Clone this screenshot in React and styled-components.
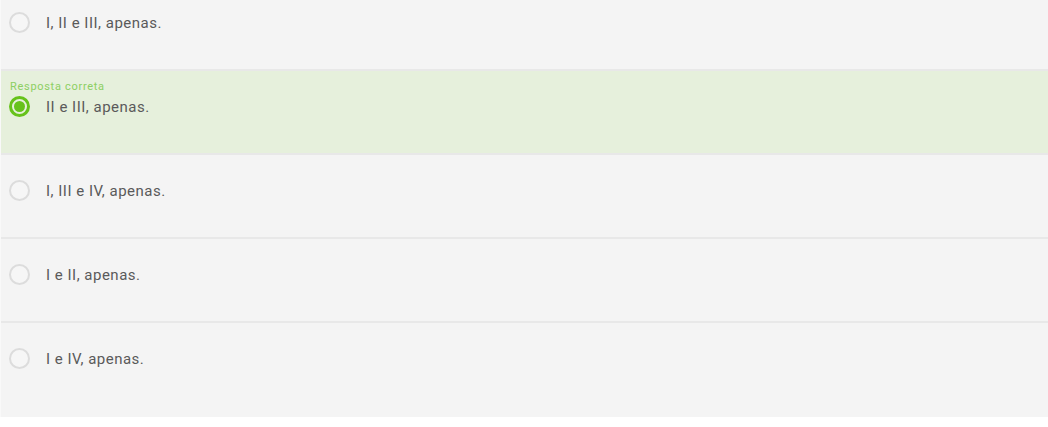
import styled, { createGlobalStyle } from 'styled-components';

const GlobalStyle = createGlobalStyle`
  body {
    margin: 0;
    background: #ffffff;
    font-family: Roboto, "Liberation Sans", Arial, sans-serif;
  }
`;

const List = styled.div`
  margin-top: -13px;
  padding-bottom: 12px;
  background: #f4f4f4;
  border-left: 1px solid #f9f9f9;
`;

const Option = styled.div`
  position: relative;
  display: flex;
  align-items: center;
  gap: 16px;
  padding: 25px 8px 36px 8px;
  border-bottom: 2px solid #e8e8e8;
  background: ${(p) => (p.correct ? '#e6f0dc' : '#f4f4f4')};

  &:last-child {
    border-bottom: none;
  }
`;

const Label = styled.span`
  position: absolute;
  top: 9px;
  left: 9px;
  font-size: 11px;
  color: #8ccf62;
  letter-spacing: 0.7px;
`;

const Radio = styled.span`
  box-sizing: border-box;
  flex: none;
  width: 21px;
  height: 21px;
  border-radius: 50%;
  border: ${(p) => (p.checked ? '3px solid #66c21b' : '2px solid #dcdcdc')};
  background: ${(p) => (p.checked ? '#e6f0dc' : '#f6f6f6')};
  display: flex;
  align-items: center;
  justify-content: center;

  &::after {
    content: '';
    display: ${(p) => (p.checked ? 'block' : 'none')};
    width: 11px;
    height: 11px;
    border-radius: 50%;
    background: #66c21b;
  }
`;

const Text = styled.span`
  font-size: 15px;
  letter-spacing: 0.5px;
  color: #5a5a5a;
`;

const options = [
  { text: 'I, II e III, apenas.' },
  { text: 'II e III, apenas.', correct: true },
  { text: 'I, III e IV, apenas.' },
  { text: 'I e II, apenas.' },
  { text: 'I e IV, apenas.' },
];

const App = () => {
  return (
    <>
      <GlobalStyle />
      <List>
        {options.map((o, i) => (
          <Option key={i} correct={o.correct}>
            {o.correct && <Label>Resposta correta</Label>}
            <Radio checked={o.correct} />
            <Text>{o.text}</Text>
          </Option>
        ))}
      </List>
    </>
  );
};

export default App;
